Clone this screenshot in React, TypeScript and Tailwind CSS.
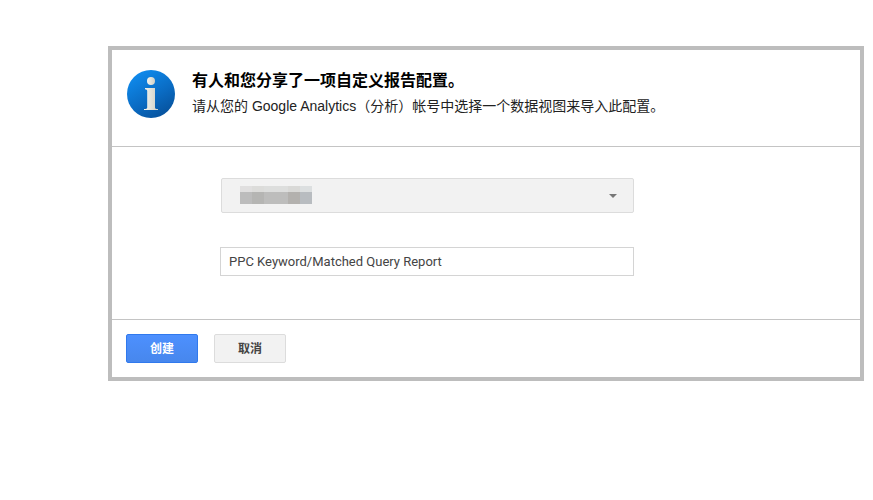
const cjk = "font-['Roboto','Noto_Sans_CJK_SC',sans-serif]";

const blurTop = [
  "bg-[#e0dfdf]",
  "bg-[#dcdcda]",
  "bg-[#dddedd]",
  "bg-[#dddedd]",
  "bg-[#d9d9d7]",
  "bg-[#dcdfe0]",
];

const blurBottom = [
  "bg-[#bcbcbc]",
  "bg-[#b5b5b3]",
  "bg-[#bdbdbc]",
  "bg-[#bdbdbc]",
  "bg-[#b3b1ae]",
  "bg-[#b8bcc0]",
];

const InfoIcon = () => (
  <svg width="48" height="48" viewBox="0 0 48 48" className="shrink-0">
    <defs>
      <linearGradient id="disc" x1="0.2" y1="0" x2="0.8" y2="1">
        <stop offset="0" stopColor="#0f8df0" />
        <stop offset="0.55" stopColor="#0a6cc4" />
        <stop offset="1" stopColor="#064f98" />
      </linearGradient>
      <linearGradient id="letter" x1="0" y1="0" x2="1" y2="0">
        <stop offset="0" stopColor="#f4f4ee" />
        <stop offset="1" stopColor="#cfcfc6" />
      </linearGradient>
    </defs>
    <circle cx="24" cy="24" r="24" fill="url(#disc)" />
    <circle cx="24" cy="11" r="4" fill="url(#letter)" />
    <path
      d="M18 18h10v19.4c0 1.2.9 1.5 3 1.7V40H17v-.9c2.2-.2 3.2-.5 3.2-1.7V21c0-1.2-.7-1.5-2.2-1.7z"
      fill="url(#letter)"
    />
  </svg>
);

const App = () => {
  return (
    <div className="h-[500px] w-[873px] bg-white pl-[108px] pt-[46px]">
      <div className={`w-[756px] border-4 border-[#bdbdbd] bg-white ${cjk}`}>
        <div className="flex h-[97px] items-start gap-[17px] border-b border-[#c4c4c4] pl-[15px] pt-[20px]">
          <InfoIcon />
          <div>
            <div className="text-[16px] font-bold leading-[22px] text-black">
              有人和您分享了一项自定义报告配置。
            </div>
            <div className="mt-[4px] font-['Liberation_Sans','Noto_Sans_CJK_SC',sans-serif] text-[14px] leading-[20px] text-[#222]">
              请从您的 Google Analytics（分析）帐号中选择一个数据视图来导入此配置。
            </div>
          </div>
        </div>

        <div className="flex h-[173px] flex-col border-b border-[#c4c4c4] pl-[108px] pt-[31px]">
          <div className="ml-[1px] flex h-[35px] w-[413px] items-center justify-between rounded-[2px] border border-[#dcdcdc] bg-[#f2f2f2] pl-[18px] pr-[16px]">
            <div className="mb-[1px] flex flex-col">
              <div className="flex h-[6px]">
                {blurTop.map((color, i) => (
                  <div key={i} className={`h-full w-[12px] ${color}`} />
                ))}
              </div>
              <div className="flex h-[12px]">
                {blurBottom.map((color, i) => (
                  <div key={i} className={`h-full w-[12px] ${color}`} />
                ))}
              </div>
            </div>
            <div className="h-0 w-0 border-x-[4px] border-t-[4px] border-x-transparent border-t-[#777]" />
          </div>
          <div className="mt-[34px] flex h-[29px] w-[414px] items-center border border-[#d4d4d4] bg-white pl-[8px] text-[13px] text-[#444]">
            PPC Keyword/Matched Query Report
          </div>
        </div>

        <div className="flex h-[57px] items-start gap-[16px] pl-[14px] pt-[14px]">
          <div className="flex h-[29px] w-[72px] items-center justify-center rounded-[2px] border border-[#3079ed] bg-gradient-to-b from-[#4d90fe] to-[#4787ed] text-[12px] font-bold text-white">
            创建
          </div>
          <div className="flex h-[29px] w-[72px] items-center justify-center rounded-[2px] border border-[#dcdcdc] bg-[#f2f2f2] text-[12px] font-bold text-[#444]">
            取消
          </div>
        </div>
      </div>
    </div>
  );
};

export default App;
